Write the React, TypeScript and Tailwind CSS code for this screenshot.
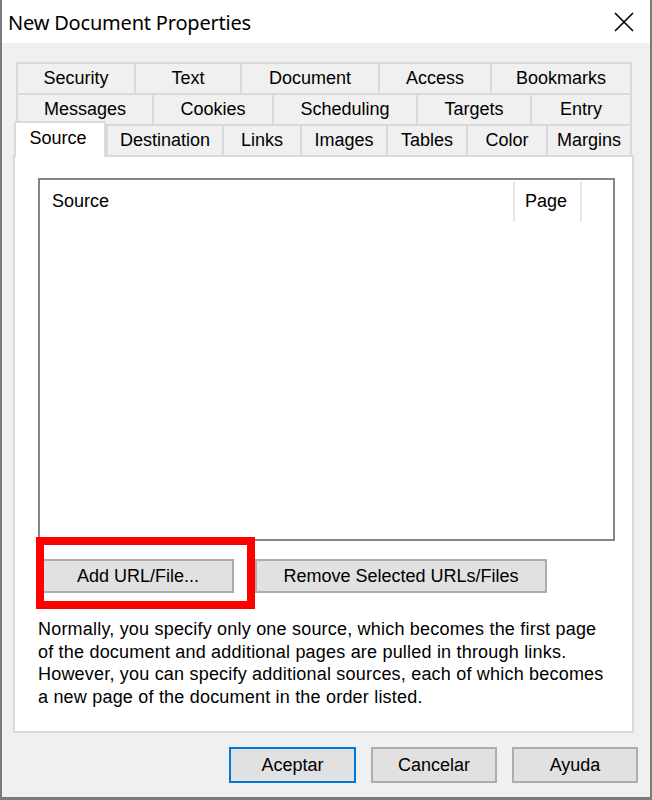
import { useState } from 'react'

const rowOne = [
  { label: 'Security', w: 118 },
  { label: 'Text', w: 106 },
  { label: 'Document', w: 138 },
  { label: 'Access', w: 112 },
  { label: 'Bookmarks', w: 142 },
]

const rowTwo = [
  { label: 'Messages', w: 136 },
  { label: 'Cookies', w: 120 },
  { label: 'Scheduling', w: 144 },
  { label: 'Targets', w: 114 },
  { label: 'Entry', w: 102 },
]

const rowThree = [
  { label: 'Destination', w: 116 },
  { label: 'Links', w: 78 },
  { label: 'Images', w: 86 },
  { label: 'Tables', w: 80 },
  { label: 'Color', w: 80 },
  { label: 'Margins', w: 86 },
]

function Tab({ label, w, last }: { label: string; w: number; last?: boolean }) {
  return (
    <div
      style={{ width: w }}
      className={`flex h-full items-center justify-center border-l-2 border-t-2 border-[#dadada] bg-[#f0f0f0] ${last ? 'border-r-2' : ''}`}
    >
      {label}
    </div>
  )
}

function WinButton({ children, w, focused }: { children: string; w: number; focused?: boolean }) {
  return (
    <button
      style={{ width: w }}
      className={`flex h-full items-center justify-center border-2 bg-[#e1e1e1] text-black ${focused ? 'border-[#0078d7]' : 'border-[#adadad]'}`}
    >
      {children}
    </button>
  )
}

export default function App() {
  const [tab] = useState('Source')

  return (
    <div className="flex h-[800px] w-[652px] flex-col overflow-hidden border-b-[3px] border-l-2 border-r-2 border-[#7a7a7a] bg-[#f0f0f0] font-['Liberation_Sans',Arial,sans-serif] text-[18px] text-black">
      <div className="flex h-[43px] shrink-0 items-center justify-between bg-white pl-[6px] pr-[16px]">
        <span className="mt-[2px] font-['Noto_Sans',sans-serif] text-[20px] tracking-[-0.2px] text-black">
          New Document Properties
        </span>
        <svg width="20" height="20" viewBox="0 0 20 20" className="mt-[1px]">
          <path d="M1 1 L19 19 M19 1 L1 19" stroke="#000" strokeWidth="1.6" fill="none" />
        </svg>
      </div>

      <div className="flex flex-1 flex-col pl-[11px] pt-[19px]">
        <div className="w-[621px]">
          <div className="ml-[3px] flex h-[31px]">
            {rowOne.map((t, i) => (
              <Tab key={t.label} {...t} last={i === rowOne.length - 1} />
            ))}
          </div>
          <div className="ml-[3px] flex h-[31px]">
            {rowTwo.map((t, i) => (
              <Tab key={t.label} {...t} last={i === rowTwo.length - 1} />
            ))}
          </div>
          <div className="relative z-10 ml-[3px] flex h-[31px]">
            <div className="-mb-[2px] -ml-[2px] -mt-[3px] flex h-[36px] w-[92px] items-start justify-center border-2 border-b-0 border-[#dadada] bg-white pr-[4px] pt-[2px]">
              {tab}
            </div>
            {rowThree.map((t, i) => (
              <Tab key={t.label} {...t} last={i === rowThree.length - 1} />
            ))}
          </div>

          <div className="relative flex h-[578px] flex-col border-2 border-[#dadada] bg-white">
            <div className="ml-[23px] mt-[21px] h-[363px] w-[577px] border-2 border-[#858585] bg-white">
              <div className="flex h-[42px] items-center pt-[1px]">
                <div className="flex h-[40px] w-[473px] items-center pl-[12px]">Source</div>
                <div className="flex h-[40px] w-[69px] items-center border-l-2 border-r-2 border-[#e8e8e8] pl-[10px]">
                  Page
                </div>
              </div>
            </div>

            <div className="ml-[27px] mt-[18px] flex h-[34px] gap-[21px]">
              <WinButton w={192}>Add URL/File...</WinButton>
              <WinButton w={292}>Remove Selected URLs/Files</WinButton>
            </div>

            <div className="absolute left-[21px] top-[380px] h-[72px] w-[219px] border-[8px] border-[#ff0000]" />

            <p className="ml-[23px] mt-[25px] whitespace-nowrap leading-[22.5px] tracking-[0.2px]">
              Normally, you specify only one source, which becomes the first page
              <br />
              of the document and additional pages are pulled in through links.
              <br />
              However, you can specify additional sources, each of which becomes
              <br />a new page of the document in the order listed.
            </p>
          </div>
        </div>

        <div className="ml-[216px] mt-[14px] flex h-[36px] gap-[15px]">
          <WinButton w={127} focused>
            Aceptar
          </WinButton>
          <WinButton w={126}>Cancelar</WinButton>
          <WinButton w={126}>Ayuda</WinButton>
        </div>
      </div>
    </div>
  )
}
